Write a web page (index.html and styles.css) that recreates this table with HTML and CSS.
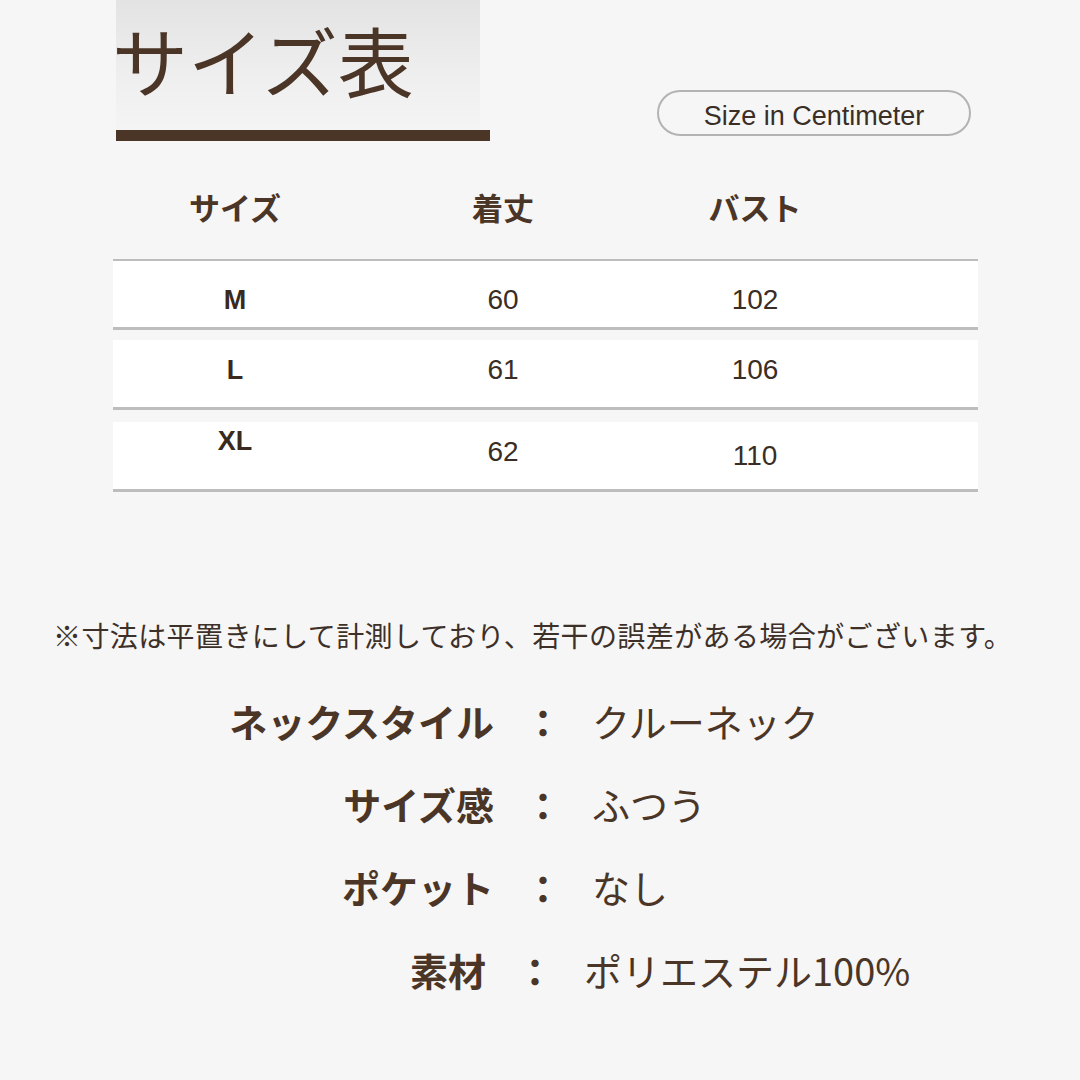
FILE: index.html
```html
<!DOCTYPE html>
<html lang="ja">
<head>
<meta charset="utf-8">
<title>サイズ表</title>
<link rel="stylesheet" href="styles.css">
</head>
<body>
<div class="page">
  <header class="header">
    <div class="title-wrap">
      <div class="title-box"><h1 class="title">サイズ表</h1></div>
      <div class="title-bar"></div>
    </div>
    <div class="pill">Size in Centimeter</div>
  </header>

  <section class="table">
    <div class="thead">
      <div class="th">サイズ</div>
      <div class="th">着丈</div>
      <div class="th">バスト</div>
    </div>
    <div class="tr first">
      <div class="td size p24">M</div>
      <div class="td p24">60</div>
      <div class="td p24">102</div>
    </div>
    <div class="tr gap10">
      <div class="td size p15">L</div>
      <div class="td p15">61</div>
      <div class="td p15">106</div>
    </div>
    <div class="tr gap12">
      <div class="td size p4">XL</div>
      <div class="td p15">62</div>
      <div class="td p19">110</div>
    </div>
  </section>

  <p class="note">※寸法は平置きにして計測しており、若干の誤差がある場合がございます。</p>

  <dl class="specs">
    <div class="spec"><dt class="label">ネックスタイル</dt><dd class="colon">：</dd><dd class="value">クルーネック</dd></div>
    <div class="spec"><dt class="label">サイズ感</dt><dd class="colon">：</dd><dd class="value">ふつう</dd></div>
    <div class="spec"><dt class="label">ポケット</dt><dd class="colon">：</dd><dd class="value">なし</dd></div>
    <div class="spec shift"><dt class="label">素材</dt><dd class="colon">：</dd><dd class="value">ポリエステル100%</dd></div>
  </dl>
</div>
</body>
</html>
```

FILE: styles.css
```css
* { box-sizing: border-box; }
html, body {
  margin: 0;
  padding: 0;
  background: #f6f6f6;
}
.page {
  width: 1080px;
  height: 1080px;
  overflow: hidden;
  color: #4a3526;
  font-family: "Noto Sans CJK JP", "Noto Sans", sans-serif;
}

/* header */
.header {
  display: flex;
  align-items: flex-start;
}
.title-wrap {
  margin-left: 116px;
  width: 374px;
}
.title-box {
  width: 364px;
  height: 130px;
  background: linear-gradient(to bottom, #e3e3e3 0%, #efefef 60%, #f4f4f4 100%);
  padding-top: 11px;
}
.title {
  margin: 0;
  font-size: 76px;
  line-height: 96px;
  font-weight: 400;
  color: #4a3526;
  letter-spacing: 0;
  margin-left: -4px;
}
.title-bar {
  width: 374px;
  height: 11px;
  background: #4a3526;
}
.pill {
  margin-left: 167px;
  margin-top: 90px;
  width: 314px;
  height: 46px;
  border: 2px solid #b3b3b3;
  border-radius: 23px;
  font-family: "Liberation Sans", Arial, sans-serif;
  font-size: 27px;
  padding-top: 6px;
  line-height: 36px;
  text-align: center;
  color: #3a2e26;
}

/* table */
.table {
  margin-left: 113px;
  width: 865px;
}
.thead, .tr {
  display: grid;
  grid-template-columns: 244px 292px 212px 1fr;
}
.thead {
  height: 118px;
  padding-top: 50px;
}
.th {
  text-align: center;
  font-size: 31px;
  line-height: 32px;
  font-weight: 700;
  color: #4a3526;
}
.tr {
  height: 70px;
  background: #ffffff;
  border-bottom: 3px solid #bdbdbd;
}
.tr.first {
  border-top: 2px solid #bdbdbd;
  height: 71px;
}
.tr.gap10 { margin-top: 10px; }
.tr.gap12 { margin-top: 12px; }
.td {
  text-align: center;
  font-family: "Liberation Sans", Arial, sans-serif;
  font-size: 28px;
  line-height: 30px;
  color: #3a2d24;
}
.td.size {
  font-weight: 700;
  font-size: 27px;
  color: #3a2a1e;
}
.p4 { padding-top: 4px; }
.p15 { padding-top: 15px; }
.p19 { padding-top: 19px; }
.p24 { padding-top: 24px; }

/* note */
.note {
  margin: 123px 0 0 53px;
  font-size: 28px;
  line-height: 40px;
  letter-spacing: 0.4px;
  color: #3d3029;
  white-space: nowrap;
}

/* specs */
.specs {
  margin: 24px 0 0 0;
}
.spec {
  display: flex;
  height: 83px;
  align-items: center;
  font-size: 38px;
  line-height: 83px;
}
.spec.shift { margin-left: -8px; }
.label {
  width: 494px;
  text-align: right;
  font-weight: 700;
  color: #4a3526;
}
.colon {
  margin: 0;
  width: 98px;
  text-align: center;
  font-weight: 700;
  color: #4a3526;
}
.value {
  margin: 0;
  font-weight: 400;
  color: #4a3526;
}
```
